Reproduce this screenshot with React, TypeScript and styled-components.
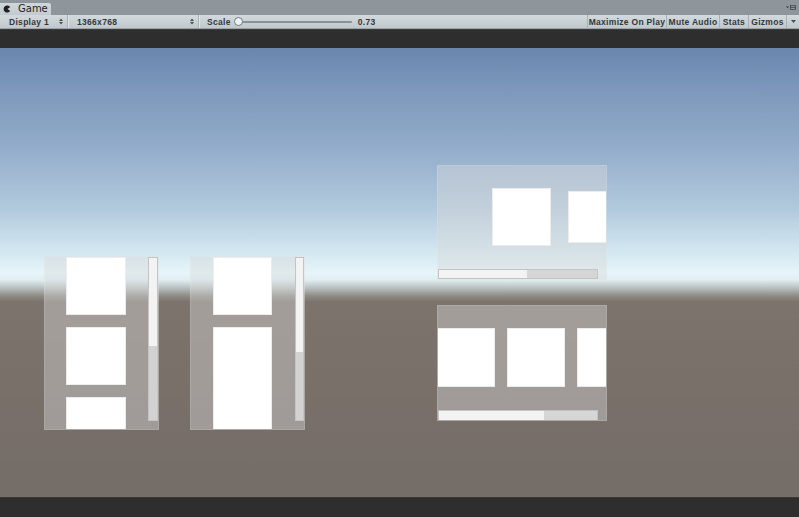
import React from "react";
import styled, { createGlobalStyle } from "styled-components";

const GlobalStyle = createGlobalStyle`
  html, body {
    margin: 0;
    padding: 0;
    overflow: hidden;
    background: #8e969b;
  }
  * { box-sizing: border-box; }
`;

const Window = styled.div`
  width: 799px;
  height: 517px;
  display: flex;
  flex-direction: column;
  font-family: "Liberation Sans", Arial, sans-serif;
  color: #1e1e1e;
`;

const TabStrip = styled.div`
  height: 15px;
  display: flex;
  align-items: flex-end;
  justify-content: space-between;
  background: #8e969b;
  padding-right: 3px;
`;

const Tab = styled.div`
  width: 51px;
  height: 12px;
  display: flex;
  align-items: center;
  gap: 7px;
  padding-left: 3px;
  background: linear-gradient(#cfd7db, #c3cbd0);
  border-top-right-radius: 2px;
  font-family: "DejaVu Sans", Verdana, sans-serif;
  font-size: 10px;
  line-height: 12px;
  color: #222;
`;

const PaneMenu = styled.div`
  align-self: flex-start;
  margin-top: 5px;
  display: flex;
`;

const Toolbar = styled.div`
  height: 14px;
  display: flex;
  align-items: stretch;
  background: linear-gradient(#d3dadd, #c0c8cc);
  border-bottom: 1px solid #9aa3a8;
  font-size: 8.5px;
  font-weight: bold;
  letter-spacing: 0.3px;
  white-space: nowrap;
  color: #33383b;
`;

const Popup = styled.div<{ $w: number; $pad: number }>`
  width: ${({ $w }) => $w}px;
  display: flex;
  align-items: center;
  justify-content: space-between;
  padding: 0 4px 0 ${({ $pad }) => $pad}px;
  border-right: 1px solid #a9b1b5;
  box-shadow: 1px 0 0 #dde3e6;
  margin-right: 3px;
`;

const SliderGroup = styled.div`
  display: flex;
  align-items: center;
  padding-left: 5px;
  gap: 5px;
`;

const Track = styled.div`
  position: relative;
  width: 116px;
  height: 2px;
  margin-right: 1px;
  background: #8a9296;
  border-radius: 1px;
`;

const Thumb = styled.div`
  position: absolute;
  left: -2px;
  top: -4px;
  width: 9px;
  height: 9px;
  border-radius: 50%;
  background: #eef2f3;
  border: 1px solid #707a7f;
`;

const Spacer = styled.div`
  flex: 1;
`;

const ToolButton = styled.div<{ $w: number }>`
  width: ${({ $w }) => $w}px;
  display: flex;
  align-items: center;
  justify-content: center;
  border-left: 1px solid #a9b1b5;
`;

const DarkBar = styled.div<{ $h: number }>`
  height: ${({ $h }) => $h}px;
  background: #2e2e2e;
  border-top: 1px solid #3c3c3c;
`;

const Viewport = styled.div`
  position: relative;
  flex: 1;
  overflow: hidden;
  background: linear-gradient(
    #6a86ad 0px,
    #7c97bb 40px,
    #93acca 100px,
    #b1c9dd 160px,
    #d4e8f1 205px,
    #e6f5f9 225px,
    #e0eef1 232px,
    #b8c0c0 240px,
    #8f8a84 248px,
    #7b736c 254px,
    #786f69 360px,
    #746d68 449px
  );
`;

const ScrollView = styled.div<{ $x: number; $y: number; $w: number; $h: number }>`
  position: absolute;
  left: ${({ $x }) => $x}px;
  top: ${({ $y }) => $y}px;
  width: ${({ $w }) => $w}px;
  height: ${({ $h }) => $h}px;
  background: rgba(218, 218, 218, 0.42);
  border: 1px solid rgba(255, 255, 255, 0.12);
  overflow: hidden;
`;

const Column = styled.div<{ $left: number; $w: number }>`
  display: flex;
  flex-direction: column;
  gap: 12px;
  margin-left: ${({ $left }) => $left}px;
  width: ${({ $w }) => $w}px;
`;

const Row = styled.div<{ $top: number; $left: number; $gap: number }>`
  display: flex;
  align-items: flex-start;
  gap: ${({ $gap }) => $gap}px;
  margin-top: ${({ $top }) => $top}px;
  margin-left: ${({ $left }) => $left}px;
`;

const Item = styled.div<{ $w?: number; $h: number; $dy?: number }>`
  flex: none;
  width: ${({ $w }) => ($w ? `${$w}px` : "100%")};
  height: ${({ $h }) => $h}px;
  margin-top: ${({ $dy }) => $dy ?? 0}px;
  background: #ffffff;
  border: 1px solid #ececec;
`;

const VScroll = styled.div<{ $w: number }>`
  position: absolute;
  right: 0;
  top: 0;
  width: ${({ $w }) => $w}px;
  height: 164px;
  display: flex;
  flex-direction: column;
  background: #d2d2d2;
  border: 1px solid #c4c4c4;
`;

const HScroll = styled.div<{ $top: number; $h: number }>`
  position: absolute;
  left: 0;
  top: ${({ $top }) => $top}px;
  width: 160px;
  height: ${({ $h }) => $h}px;
  display: flex;
  background: #d6d6d6;
  border: 1px solid #c4c4c4;
`;

const Handle = styled.div`
  background: #f3f3f3;
`;

const PopupArrows = () => (
  <svg width="4" height="7" viewBox="0 0 4 7">
    <path d="M0 3 L2 0.5 L4 3 Z M0 4 L2 6.5 L4 4 Z" fill="#4a4f52" />
  </svg>
);

const GameIcon = () => (
  <svg width="8" height="8" viewBox="0 0 8 8">
    <path d="M7.2 2 A3.6 3.6 0 1 0 7.2 6 L4.5 4 Z" fill="#1f1f1f" />
  </svg>
);

const MenuIcon = () => (
  <svg width="10" height="5" viewBox="0 0 10 5">
    <path d="M0 1.5 L3 1.5 L1.5 3.2 Z" fill="#33393c" />
    <rect x="4.5" y="0.3" width="5" height="4.2" fill="none" stroke="#3f4548" strokeWidth="0.8" />
    <line x1="4.5" y1="2.4" x2="9.5" y2="2.4" stroke="#3f4548" strokeWidth="0.8" />
  </svg>
);

const App: React.FC = () => (
  <>
    <GlobalStyle />
    <Window>
      <TabStrip>
        <Tab>
          <GameIcon />
          Game
        </Tab>
        <PaneMenu>
          <MenuIcon />
        </PaneMenu>
      </TabStrip>

      <Toolbar>
        <Popup $w={68} $pad={9}>
          Display 1
          <PopupArrows />
        </Popup>
        <Popup $w={128} $pad={6}>
          1366x768
          <PopupArrows />
        </Popup>
        <SliderGroup>
          Scale
          <Track>
            <Thumb />
          </Track>
          0.73
        </SliderGroup>
        <Spacer />
        <ToolButton $w={79}>Maximize On Play</ToolButton>
        <ToolButton $w={53}>Mute Audio</ToolButton>
        <ToolButton $w={29}>Stats</ToolButton>
        <ToolButton $w={38}>Gizmos</ToolButton>
        <ToolButton $w={13}>
          <svg width="5" height="3" viewBox="0 0 5 3">
            <path d="M0 0 L5 0 L2.5 3 Z" fill="#4a4f52" />
          </svg>
        </ToolButton>
      </Toolbar>

      <DarkBar $h={19} />

      <Viewport>
        {/* vertical scroll view, three equal items */}
        <ScrollView $x={44} $y={208} $w={115} $h={174}>
          <Column $left={21} $w={60}>
            <Item $h={58} />
            <Item $h={58} />
            <Item $h={58} />
          </Column>
          <VScroll $w={10}>
            <Handle style={{ height: 88 }} />
          </VScroll>
        </ScrollView>

        {/* vertical scroll view, short + tall item */}
        <ScrollView $x={190} $y={208} $w={115} $h={174}>
          <Column $left={22} $w={59}>
            <Item $h={58} />
            <Item $h={110} />
          </Column>
          <VScroll $w={9}>
            <Handle style={{ height: 94 }} />
          </VScroll>
        </ScrollView>

        {/* horizontal scroll view over the sky */}
        <ScrollView $x={437} $y={117} $w={170} $h={115}>
          <Row $top={22} $left={54} $gap={17}>
            <Item $w={59} $h={58} />
            <Item $w={59} $h={52} $dy={3} />
          </Row>
          <HScroll $top={103} $h={10}>
            <Handle style={{ width: 88 }} />
          </HScroll>
        </ScrollView>

        {/* horizontal scroll view over the ground */}
        <ScrollView $x={437} $y={257} $w={170} $h={116}>
          <Row $top={22} $left={-1} $gap={12}>
            <Item $w={58} $h={59} />
            <Item $w={58} $h={59} />
            <Item $w={58} $h={59} />
          </Row>
          <HScroll $top={104} $h={11}>
            <Handle style={{ width: 105 }} />
          </HScroll>
        </ScrollView>
      </Viewport>

      <DarkBar $h={20} />
    </Window>
  </>
);

export default App;
